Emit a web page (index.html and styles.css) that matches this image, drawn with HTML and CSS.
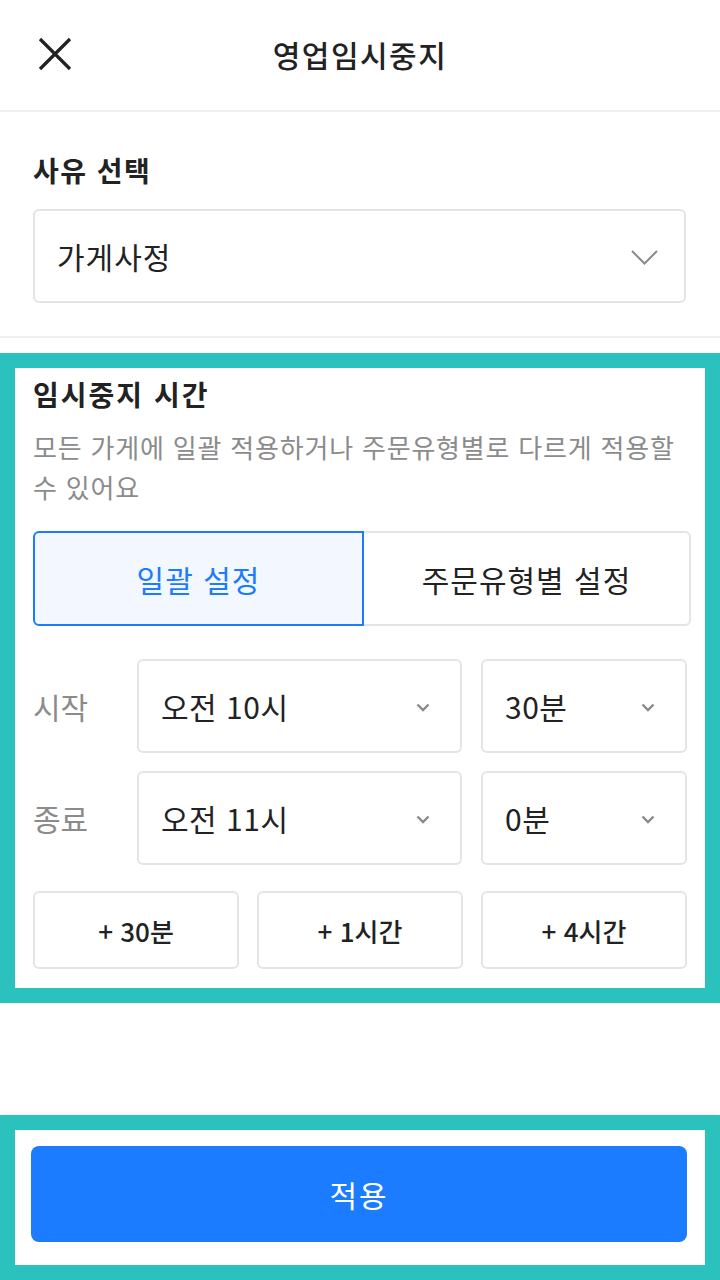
FILE: index.html
```html
<!DOCTYPE html>
<html lang="ko">
<head>
<meta charset="utf-8">
<title>영업임시중지</title>
<link rel="stylesheet" href="styles.css">
</head>
<body>
<div class="page">
  <header class="topbar">
    <button class="close" aria-label="닫기">
      <svg width="34" height="34" viewBox="0 0 34 34"><path d="M2 2 L32 32 M32 2 L2 32" stroke="#222" stroke-width="3.2" fill="none" stroke-linecap="butt"/></svg>
    </button>
    <h1 class="title">영업임시중지</h1>
    <span></span>
  </header>

  <section class="reason">
    <h2 class="label">사유 선택</h2>
    <div class="select big">
      <span>가게사정</span>
      <svg width="27" height="15" viewBox="0 0 27 15"><path d="M1 1 L13.5 13.5 L26 1" stroke="#8a8a8a" stroke-width="2" fill="none"/></svg>
    </div>
  </section>

  <section class="highlight">
    <div class="inner">
      <h2 class="label">임시중지 시간</h2>
      <p class="desc">모든 가게에 일괄 적용하거나 주문유형별로 다르게 적용할 수 있어요</p>
      <div class="segment">
        <button class="seg active">일괄 설정</button>
        <button class="seg">주문유형별 설정</button>
      </div>
      <div class="timerow">
        <span class="rowlabel">시작</span>
        <div class="select time wide"><span>오전 10시</span><svg width="14" height="9" viewBox="0 0 14 9"><path d="M1.5 1.5 L7 7 L12.5 1.5" stroke="#8a8a8a" stroke-width="2.4" fill="none"/></svg></div>
        <div class="select time narrow"><span>30분</span><svg width="14" height="9" viewBox="0 0 14 9"><path d="M1.5 1.5 L7 7 L12.5 1.5" stroke="#8a8a8a" stroke-width="2.4" fill="none"/></svg></div>
      </div>
      <div class="timerow">
        <span class="rowlabel">종료</span>
        <div class="select time wide"><span>오전 11시</span><svg width="14" height="9" viewBox="0 0 14 9"><path d="M1.5 1.5 L7 7 L12.5 1.5" stroke="#8a8a8a" stroke-width="2.4" fill="none"/></svg></div>
        <div class="select time narrow"><span>0분</span><svg width="14" height="9" viewBox="0 0 14 9"><path d="M1.5 1.5 L7 7 L12.5 1.5" stroke="#8a8a8a" stroke-width="2.4" fill="none"/></svg></div>
      </div>
      <div class="quick">
        <button class="qbtn">+ 30분</button>
        <button class="qbtn">+ 1시간</button>
        <button class="qbtn">+ 4시간</button>
      </div>
    </div>
  </section>

  <footer class="footer">
    <div class="footinner">
      <button class="apply">적용</button>
    </div>
  </footer>
</div>
</body>
</html>
```

FILE: styles.css
```css
* { box-sizing: border-box; }
html, body { margin: 0; padding: 0; }
body {
  font-family: "Noto Sans CJK KR", "Noto Sans", sans-serif;
  color: #222;
  background: #fff;
}
button { font-family: inherit; cursor: pointer; }
.page {
  min-height: 1280px;
  display: flex;
  flex-direction: column;
}
.topbar {
  height: 112px;
  display: grid;
  grid-template-columns: 1fr auto 1fr;
  align-items: center;
  border-bottom: 2px solid #efefef;
  padding: 0 0 2px 38px;
}
.close {
  border: 0;
  background: none;
  padding: 0;
  width: 34px;
  height: 34px;
  display: flex;
}
.title {
  margin: 0;
  font-size: 30px;
  font-weight: 500;
  line-height: 36px;
  letter-spacing: 1.5px;
  margin-left: -38px;
}
.label {
  margin: 0;
  font-size: 28px;
  line-height: 36px;
  font-weight: 700;
  letter-spacing: 1.5px;
}
.highlight .label { letter-spacing: 2px; }
.reason {
  padding: 40px 34px 33px 33px;
  border-bottom: 2px solid #efefef;
  display: flex;
  flex-direction: column;
  gap: 21px;
}
.select {
  border: 2px solid #e4e4e4;
  border-radius: 6px;
  display: flex;
  align-items: center;
  justify-content: space-between;
  font-size: 30px;
  letter-spacing: 0.5px;
}
.select.big {
  height: 94px;
  padding: 0 26px 0 22px;
}
.select.big span { letter-spacing: 1px; }
.select.big svg { margin-top: 2px; }
.highlight {
  margin-top: 15px;
  border: 15px solid #2bc1bc;
}
.inner {
  padding: 8px 18px 19px 18px;
}
.desc {
  margin: 15px 0 0;
  font-size: 26px;
  line-height: 40px;
  color: #8b8b8b;
  letter-spacing: 0.8px;
}
.segment {
  margin: 24px -4px 0 0;
  display: flex;
  height: 95px;
}
.seg {
  flex: 1;
  font-size: 30px;
  letter-spacing: 1px;
  background: #fff;
  color: #222;
  border: 2px solid #e4e4e4;
  border-left: 0;
  border-radius: 0 6px 6px 0;
}
.seg.active {
  flex: 0 0 331px;
  background: #f3f7ff;
  color: #1b7cff;
  border: 2px solid #1b7cff;
  border-radius: 6px 0 0 6px;
}
.timerow {
  display: flex;
  align-items: center;
  gap: 19px;
  margin-top: 18px;
}
.segment + .timerow { margin-top: 33px; }
.rowlabel {
  width: 85px;
  font-size: 30px;
  color: #8b8b8b;
  letter-spacing: 0;
}
.select.time {
  height: 94px;
  padding: 0 30px 0 22px;
}
.select.wide { flex: 1; }
.select.narrow { flex: 0 0 206px; }
.select.time svg { margin-top: 2px; }
.quick {
  margin-top: 26px;
  display: grid;
  grid-template-columns: repeat(3, 1fr);
  gap: 18px;
}
.qbtn {
  height: 78px;
  border: 2px solid #e4e4e4;
  border-radius: 6px;
  background: #fff;
  color: #222;
  font-size: 26px;
  font-weight: 500;
  letter-spacing: 0;
}
.footer {
  margin-top: auto;
  border: 15px solid #2bc1bc;
  box-shadow: 0 -2px 4px rgba(0,0,0,0.06);
}
.footinner {
  padding: 16px 18px 23px 16px;
}
.apply {
  width: 100%;
  height: 96px;
  border: 0;
  border-radius: 8px;
  background: #1b7cff;
  color: #fff;
  font-size: 30px;
  letter-spacing: 2px;
}
```
